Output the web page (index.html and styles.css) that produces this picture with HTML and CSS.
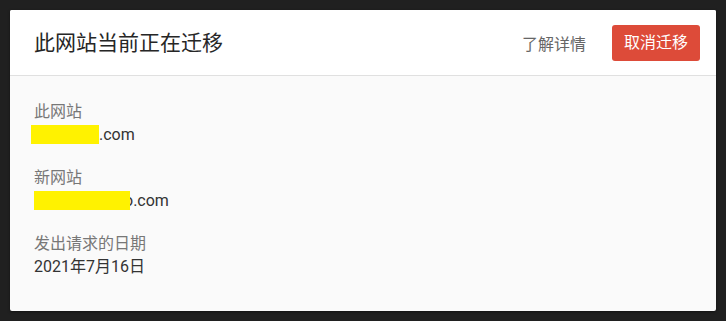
FILE: index.html
```html
<!DOCTYPE html>
<html lang="zh-CN">
<head>
<meta charset="utf-8">
<title>此网站当前正在迁移</title>
<link rel="stylesheet" href="styles.css">
</head>
<body>
<div class="card">
  <div class="card-header">
    <h1 class="title">此网站当前正在迁移</h1>
    <div class="actions">
      <a class="link" href="#">了解详情</a>
      <button class="btn-cancel" type="button">取消迁移</button>
    </div>
  </div>
  <div class="card-body">
    <div class="field">
      <div class="label">此网站</div>
      <div class="value"><span class="redact redact-a"></span>.com</div>
    </div>
    <div class="field">
      <div class="label">新网站</div>
      <div class="value"><span class="hidden-char">o</span><span class="redact redact-b"></span>.com</div>
    </div>
    <div class="field">
      <div class="label">发出请求的日期</div>
      <div class="value">2021年7月16日</div>
    </div>
  </div>
</div>
</body>
</html>
```
FILE: styles.css
```css
html, body {
  margin: 0;
  padding: 0;
}
body {
  background: #202020;
  font-family: Roboto, "Noto Sans CJK SC", sans-serif;
  width: 726px;
  height: 321px;
  overflow: hidden;
  padding: 10px 10px 0 10px;
  box-sizing: border-box;
}
.card {
  width: 706px;
  background: #fafafa;
  border-radius: 2px;
  box-shadow: 0 1px 3px rgba(0, 0, 0, 0.45);
  overflow: hidden;
}
.card-header {
  height: 64px;
  background: #ffffff;
  border-bottom: 1px solid #e0e0e0;
  display: flex;
  align-items: center;
  justify-content: space-between;
  padding: 1px 16px 0 24px;
  box-sizing: content-box;
}
.title {
  margin: 0;
  font-size: 21px;
  font-weight: 400;
  color: #262626;
  line-height: 30px;
}
.actions {
  display: flex;
  align-items: center;
}
.link {
  color: #666666;
  text-decoration: none;
  font-size: 16px;
  margin-right: 26px;
}
.btn-cancel {
  height: 36px;
  padding: 0 12px;
  border: none;
  border-radius: 3px;
  background: #dd4b39;
  color: #ffffff;
  font-family: inherit;
  font-size: 16px;
  line-height: 36px;
}
.card-body {
  padding: 24px 24px 33px 24px;
}
.field {
  margin-bottom: 20px;
}
.field:last-child {
  margin-bottom: 0;
}
.label {
  font-size: 16px;
  line-height: 23px;
  color: #777777;
}
.value {
  font-size: 16px;
  line-height: 23px;
  color: #333333;
}
.redact {
  display: inline-block;
  height: 19px;
  background: #fff200;
  vertical-align: -4px;
}
.redact-a {
  width: 68px;
  margin-left: -3px;
}
.hidden-char {
  margin-left: 90px;
}
.redact-b {
  width: 96px;
  margin-left: -99px;
  margin-right: 3px;
}
```
